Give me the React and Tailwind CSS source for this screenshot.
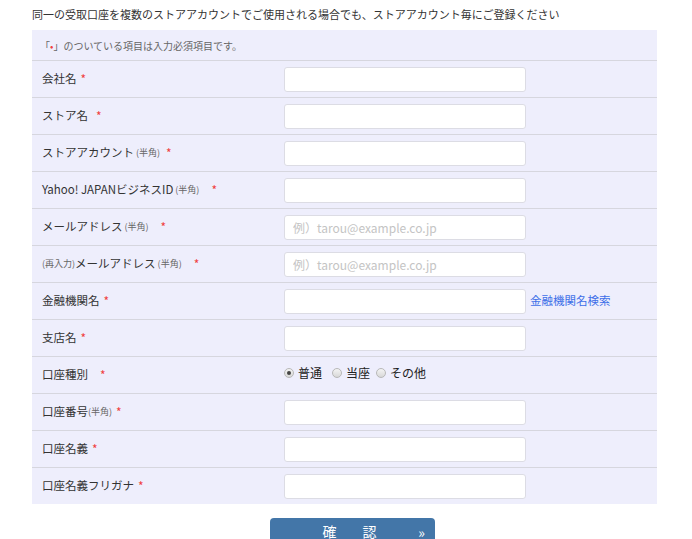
import React from 'react';

const Req = ({ gap = 'ml-1.5' }) => <span className={`${gap} text-[#f04040] text-[12px]`}>*</span>;
const Sub = ({ children }) => <span className="text-[9px] text-[#666]">{children}</span>;

const TextInput = ({ placeholder }) => (
    <input
        type="text"
        placeholder={placeholder}
        className="w-[242px] h-[25px] bg-white border border-[#dcdce4] rounded-[3px] px-2 text-[12px] placeholder:text-[#c4c4c4] outline-none"
    />
);

const Radio = ({ checked, label }) => (
    <label className="flex items-center gap-1 mr-1.5">
        <span className="w-[10px] h-[10px] rounded-full border border-[#b8b8b8] bg-gradient-to-b from-[#f4f4f4] to-[#d8d8d8] flex items-center justify-center">
            {checked && <span className="w-[4px] h-[4px] rounded-full bg-[#444]" />}
        </span>
        <span className="text-[12px] text-[#222]">{label}</span>
    </label>
);

const Row = ({ label, children }) => (
    <div className="flex items-center h-[37px] border-t border-[#d6d6de]">
        <div className="w-[252px] pl-[10px] text-[11.5px] text-[#333] flex items-center">{label}</div>
        <div className="flex items-center">{children}</div>
    </div>
);

const App = () => {
    return (
        <div className="w-[692px] h-[539px] bg-white overflow-hidden" style={{ fontFamily: '"Noto Sans CJK JP", "Noto Sans", sans-serif' }}>
            <p className="pl-[32px] pt-[5px] h-[30px] text-[11px] text-[#333] leading-[18px]">
                同一の受取口座を複数のストアアカウントでご使用される場合でも、ストアアカウント毎にご登録ください
            </p>

            <div className="ml-[32px] w-[625px] bg-[#eeeefc]">
                <div className="h-[30px] flex items-center pl-[8px] text-[10px] text-[#666]">
                    「<span className="text-[#f04040]">•</span>」のついている項目は入力必須項目です。
                </div>

                <Row label={<>会社名<Req gap="ml-1" /></>}><TextInput /></Row>
                <Row label={<>ストア名<Req gap="ml-2" /></>}><TextInput /></Row>
                <Row label={<>ストアアカウント <Sub>&nbsp;(半角)</Sub><Req /></>}><TextInput /></Row>
                <Row label={<>Yahoo! JAPANビジネスID <Sub>&nbsp;(半角)</Sub><Req gap="ml-3" /></>}><TextInput /></Row>
                <Row label={<>メールアドレス <Sub>&nbsp;(半角)</Sub><Req gap="ml-3" /></>}><TextInput placeholder="例）tarou@example.co.jp" /></Row>
                <Row label={<><Sub>(再入力)</Sub>メールアドレス <Sub>&nbsp;(半角)</Sub><Req gap="ml-3" /></>}><TextInput placeholder="例）tarou@example.co.jp" /></Row>
                <Row label={<>金融機関名<Req gap="ml-1" /></>}>
                    <TextInput />
                    <a className="ml-[4px] text-[11.5px] text-[#3d6fe8]">金融機関名検索</a>
                </Row>
                <Row label={<>支店名<Req gap="ml-1" /></>}><TextInput /></Row>
                <Row label={<>口座種別<Req gap="ml-3" /></>}>
                    <div className="flex items-center -mt-1">
                        <Radio checked label="普通" />
                        <span className="w-1" />
                        <Radio label="当座" />
                        <Radio label="その他" />
                    </div>
                </Row>
                <Row label={<>口座番号<Sub>(半角)</Sub><Req gap="ml-1" /></>}><TextInput /></Row>
                <Row label={<>口座名義<Req gap="ml-1" /></>}><TextInput /></Row>
                <Row label={<>口座名義フリガナ<Req gap="ml-1" /></>}><TextInput /></Row>
            </div>

            <div className="mt-[14px] ml-[270px] w-[165px] h-[30px] rounded-t-[4px] bg-[#4376a8] relative flex justify-center pt-[3px]">
                <span className="text-white text-[14px] tracking-[6px]">確　認</span>
                <span className="absolute right-[10px] top-[4px] text-white text-[14px]">»</span>
            </div>
        </div>
    );
};

export default App;
